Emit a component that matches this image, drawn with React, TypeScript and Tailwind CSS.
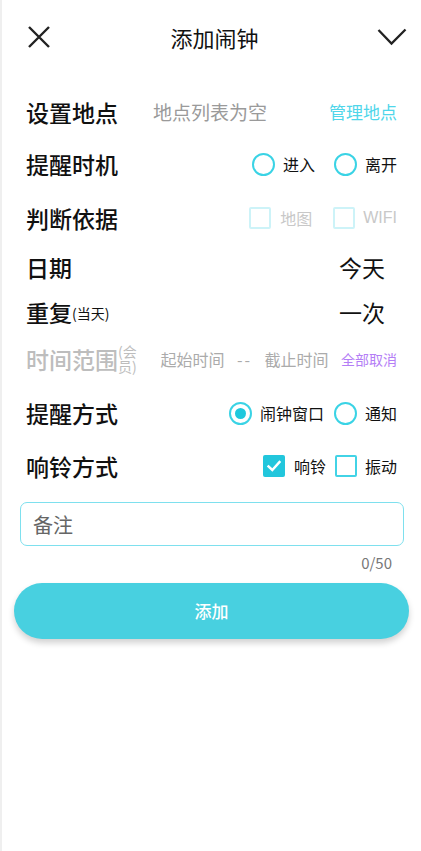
import { useState } from 'react'

const font = { fontFamily: '"Noto Sans CJK SC", "Noto Sans", sans-serif' }

function Radio({ checked }: { checked?: boolean }) {
  return (
    <span className="flex h-[23px] w-[23px] shrink-0 items-center justify-center rounded-full border-[2.5px] border-[#3ad3e5]">
      {checked && <span className="h-[11px] w-[11px] rounded-full bg-[#1ec8dd]" />}
    </span>
  )
}

function Box({ checked, faded }: { checked?: boolean; faded?: boolean }) {
  if (checked) {
    return (
      <span className="flex h-[22px] w-[22px] shrink-0 items-center justify-center rounded-[2px] bg-[#22c6dc]">
        <svg width="16" height="16" viewBox="0 0 16 16" fill="none">
          <path d="M2.5 8.5 L6.3 12 L13.5 4" stroke="white" strokeWidth="2.4" strokeLinecap="square" />
        </svg>
      </span>
    )
  }
  return (
    <span
      className={`block h-[22px] w-[22px] shrink-0 rounded-[2px] border-2 ${
        faded ? 'border-[#cdf3f8]' : 'border-[#42d3e6]'
      }`}
    />
  )
}

function Row({ h, children }: { h: string; children: React.ReactNode }) {
  return <div className={`flex items-center justify-between ${h}`}>{children}</div>
}

export default function App() {
  const [note, setNote] = useState('')

  return (
    <div style={font} className="min-h-[851px] w-[421px] border-l-2 border-[#efefef] bg-white text-[#111]">
      {/* header */}
      <div className="flex h-[74px] items-center justify-between pl-[24px] pr-[14px]">
        <svg width="26" height="26" viewBox="0 0 26 26" fill="none">
          <path d="M3 3 L23 23 M23 3 L3 23" stroke="#222" strokeWidth="2.4" />
        </svg>
        <span className="text-[22px] text-[#111]">添加闹钟</span>
        <svg width="30" height="18" viewBox="0 0 30 18" fill="none">
          <path d="M1.5 2 L14.5 15.5 L28.5 1.5" stroke="#222" strokeWidth="2.3" />
        </svg>
      </div>

      <div className="mt-[12px] px-[24px]">
        <Row h="h-[52px]">
          <span className="w-[127px] text-[23px] font-medium">设置地点</span>
          <span className="flex-1 text-[19px] text-[#9a9a9a]">地点列表为空</span>
          <span className="text-[17px] text-[#4fd6ea]">管理地点</span>
        </Row>

        <Row h="h-[52px]">
          <span className="text-[23px] font-medium">提醒时机</span>
          <div className="flex items-center text-[16px]">
            <Radio />
            <span className="ml-[8px]">进入</span>
            <span className="ml-[19px] flex"><Radio /></span>
            <span className="ml-[8px]">离开</span>
          </div>
        </Row>

        <Row h="h-[56px]">
          <span className="text-[23px] font-medium">判断依据</span>
          <div className="flex items-center text-[16px] text-[#c8c8c8]">
            <Box faded />
            <span className="ml-[9px]">地图</span>
            <span className="ml-[21px] flex"><Box faded /></span>
            <span className="ml-[8px]" style={{ fontFamily: '"Liberation Sans", sans-serif' }}>WIFI</span>
          </div>
        </Row>

        <Row h="h-[42px]">
          <span className="text-[23px] font-medium">日期</span>
          <span className="mr-[12px] text-[23px]">今天</span>
        </Row>

        <Row h="h-[48px]">
          <span className="flex items-end">
            <span className="text-[23px] font-medium">重复</span>
            <span className="mb-[5px] text-[14px]">(当天)</span>
          </span>
          <span className="mr-[12px] text-[23px]">一次</span>
        </Row>

        <Row h="h-[46px]">
          <span className="flex items-center">
            <span className="text-[23px] font-medium text-[#bdbdbd]">时间范围</span>
            <span className="w-[22px] text-[14px] leading-[15px] text-[#bdbdbd]">(会员)</span>
          </span>
          <span className="ml-[8px] text-[16px] text-[#ababab]">起始时间</span>
          <span className="text-[16px] tracking-[2px] text-[#ababab]">--</span>
          <span className="text-[16px] text-[#ababab]">截止时间</span>
          <span className="text-[14px] text-[#b47ef6]">全部取消</span>
        </Row>

        <Row h="h-[62px]">
          <span className="text-[23px] font-medium">提醒方式</span>
          <div className="flex items-center text-[16px]">
            <Radio checked />
            <span className="ml-[8px]">闹钟窗口</span>
            <span className="ml-[10px] flex"><Radio /></span>
            <span className="ml-[8px]">通知</span>
          </div>
        </Row>

        <Row h="h-[44px]">
          <span className="text-[23px] font-medium">响铃方式</span>
          <div className="flex items-center text-[16px]">
            <Box checked />
            <span className="ml-[9px]">响铃</span>
            <span className="ml-[9px] flex"><Box /></span>
            <span className="ml-[8px]">振动</span>
          </div>
        </Row>
      </div>

      {/* note */}
      <div className="mt-[14px] pl-[18px] pr-[17px]">
        <input
          value={note}
          onChange={(e) => setNote(e.target.value)}
          placeholder="备注"
          maxLength={50}
          className="h-[44px] w-full rounded-[7px] border border-[#7ee0ee] px-[12px] text-[20px] text-[#555] outline-none placeholder:text-[#666]"
        />
        <div className="mt-[6px] pr-[12px] text-right text-[15px] text-[#777]">{note.length}/50</div>
      </div>

      <div className="mt-[8px] px-[12px]">
        <button className="h-[56px] w-full rounded-full bg-[#48d0e0] text-[17px] font-medium text-white shadow-[0_4px_6px_rgba(0,0,0,0.18)]">
          添加
        </button>
      </div>
    </div>
  )
}
